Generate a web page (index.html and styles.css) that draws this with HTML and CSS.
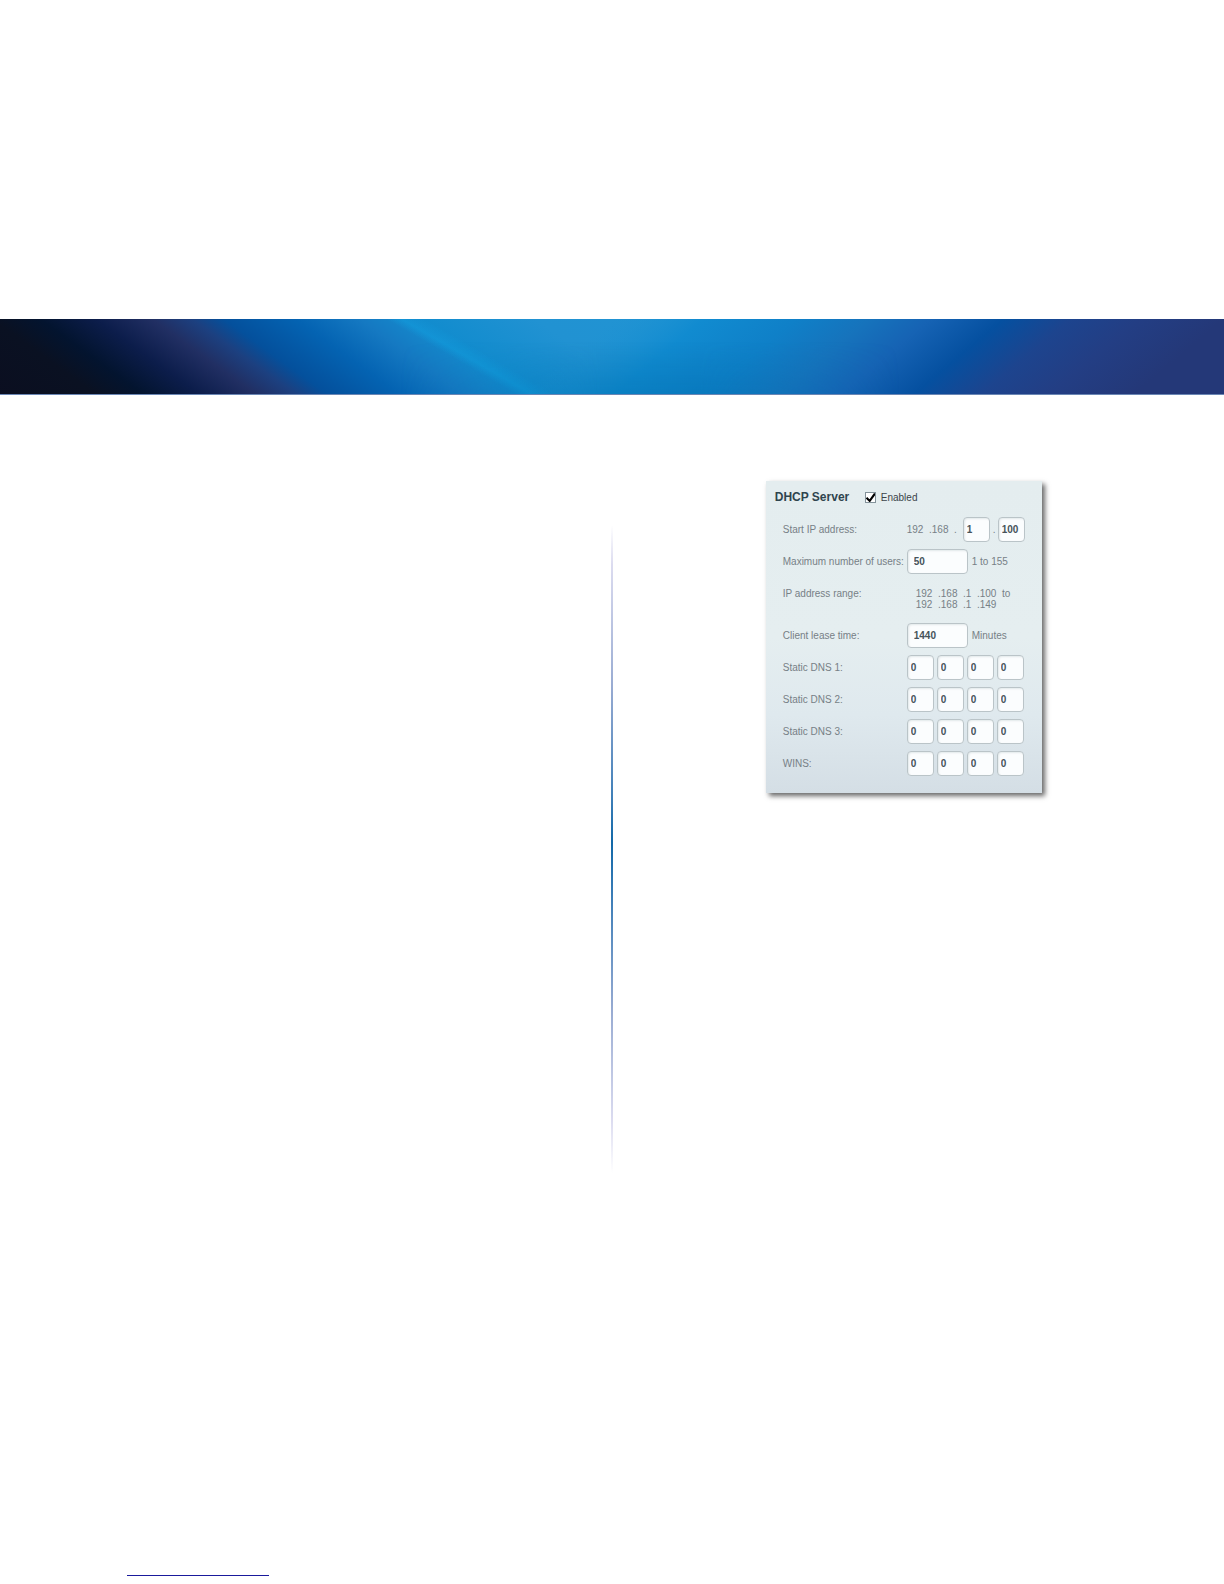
FILE: index.html
```html
<!DOCTYPE html>
<html lang="en">
<head>
    <meta charset="UTF-8">
    <meta name="viewport" content="width=device-width, initial-scale=1.0">
    <title>DHCP Server</title>
    <link rel="stylesheet" href="styles.css">
</head>
<body>
    <header class="banner">
        <svg viewBox="0 0 1224 75" preserveAspectRatio="none" aria-hidden="true">
            <defs>
                <linearGradient id="left" gradientUnits="userSpaceOnUse" x1="-120" y1="0" x2="680" y2="0" gradientTransform="skewX(54)">
                    <stop offset="0" stop-color="#0b0e20"/>
                    <stop offset="0.14" stop-color="#0a1122"/>
                    <stop offset="0.2" stop-color="#03142f"/>
                    <stop offset="0.27" stop-color="#0c1d4b"/>
                    <stop offset="0.34" stop-color="#212f63"/>
                    <stop offset="0.39" stop-color="#1c4080"/>
                    <stop offset="0.43" stop-color="#04509c"/>
                    <stop offset="0.52" stop-color="#0463b2"/>
                    <stop offset="0.6" stop-color="#1579c2"/>
                    <stop offset="0.64" stop-color="#1583c8"/>
                    <stop offset="0.68" stop-color="#128cce"/>
                    <stop offset="0.82" stop-color="#2192d2"/>
                    <stop offset="1" stop-color="#2194d3"/>
                </linearGradient>
                <linearGradient id="right" gradientUnits="userSpaceOnUse" x1="612" y1="0" x2="1224" y2="0" gradientTransform="skewX(-50)">
                    <stop offset="0" stop-color="#1e92d2" stop-opacity="0"/>
                    <stop offset="0.15" stop-color="#118bd0"/>
                    <stop offset="0.3" stop-color="#0f80c8"/>
                    <stop offset="0.42" stop-color="#1673bc"/>
                    <stop offset="0.52" stop-color="#1663b4"/>
                    <stop offset="0.64" stop-color="#0550a0"/>
                    <stop offset="0.75" stop-color="#1d448e"/>
                    <stop offset="0.86" stop-color="#233e84"/>
                    <stop offset="1" stop-color="#243878"/>
                </linearGradient>
                <linearGradient id="shade" x1="0" y1="0" x2="0" y2="1">
                    <stop offset="0.3" stop-color="#006fae" stop-opacity="0"/>
                    <stop offset="1" stop-color="#006fae" stop-opacity="0.4"/>
                </linearGradient>
                <linearGradient id="streak" gradientUnits="userSpaceOnUse" x1="386" y1="0" x2="425" y2="0" gradientTransform="skewX(60)">
                    <stop offset="0" stop-color="#12a0e0" stop-opacity="0"/>
                    <stop offset="0.4" stop-color="#12a0e0" stop-opacity="0.5"/>
                    <stop offset="1" stop-color="#12a0e0" stop-opacity="0"/>
                </linearGradient>
            </defs>
            <rect width="1224" height="75" fill="url(#left)"/>
            <rect width="1224" height="75" fill="url(#streak)"/>
            <rect width="1224" height="75" fill="url(#right)"/>
            <rect x="400" width="500" height="75" fill="url(#shade)" class="shade"/>
        </svg>
    </header>

    <main class="columns">
        <section class="column"></section>
        <div class="divider"></div>
        <section class="column">
            <form class="panel">
                <div class="panel-header">
                    <h2>DHCP Server</h2>
                    <input type="checkbox" id="enabled" class="check" checked>
                    <label for="enabled">Enabled</label>
                </div>

                <div class="row">
                    <label for="start3">Start IP address:</label>
                    <div class="field">
                        <span class="prefix">192&nbsp; .168&nbsp; .</span>
                        <input type="text" id="start3" class="box" value="1">
                        <span class="dot">.</span>
                        <input type="text" class="box" aria-label="Start IP address, last part" value="100">
                    </div>
                </div>
                <div class="row">
                    <label for="users">Maximum number of users:</label>
                    <div class="field">
                        <input type="text" id="users" class="box wide" value="50">
                        <span class="hint">1 to 155</span>
                    </div>
                </div>
                <div class="row range">
                    <span>IP address range:</span>
                    <div class="range-value">192&nbsp; .168&nbsp; .1&nbsp; .100&nbsp; to<br>192&nbsp; .168&nbsp; .1&nbsp; .149</div>
                </div>
                <div class="row">
                    <label for="lease">Client lease time:</label>
                    <div class="field">
                        <input type="text" id="lease" class="box wide" value="1440">
                        <span class="hint">Minutes</span>
                    </div>
                </div>
                <div class="row">
                    <label for="dns1">Static DNS 1:</label>
                    <div class="field">
                        <input type="text" id="dns1" class="box" value="0">
                        <input type="text" class="box" aria-label="Static DNS 1, part 2" value="0">
                        <input type="text" class="box" aria-label="Static DNS 1, part 3" value="0">
                        <input type="text" class="box" aria-label="Static DNS 1, part 4" value="0">
                    </div>
                </div>
                <div class="row">
                    <label for="dns2">Static DNS 2:</label>
                    <div class="field">
                        <input type="text" id="dns2" class="box" value="0">
                        <input type="text" class="box" aria-label="Static DNS 2, part 2" value="0">
                        <input type="text" class="box" aria-label="Static DNS 2, part 3" value="0">
                        <input type="text" class="box" aria-label="Static DNS 2, part 4" value="0">
                    </div>
                </div>
                <div class="row">
                    <label for="dns3">Static DNS 3:</label>
                    <div class="field">
                        <input type="text" id="dns3" class="box" value="0">
                        <input type="text" class="box" aria-label="Static DNS 3, part 2" value="0">
                        <input type="text" class="box" aria-label="Static DNS 3, part 3" value="0">
                        <input type="text" class="box" aria-label="Static DNS 3, part 4" value="0">
                    </div>
                </div>
                <div class="row">
                    <label for="wins">WINS:</label>
                    <div class="field">
                        <input type="text" id="wins" class="box" value="0">
                        <input type="text" class="box" aria-label="WINS, part 2" value="0">
                        <input type="text" class="box" aria-label="WINS, part 3" value="0">
                        <input type="text" class="box" aria-label="WINS, part 4" value="0">
                    </div>
                </div>
            </form>
        </section>
    </main>

    <footer class="footer">
        <div class="footer-line"></div>
    </footer>
</body>
</html>
```

FILE: styles.css
```css
* {
    box-sizing: border-box;
}
body {
    font-family: 'Liberation Sans', Arial, sans-serif;
    font-size: 10px;
    line-height: 11px;
    color: #778086;
    background: #fff;
    display: flex;
    flex-direction: column;
    min-height: 100vh;
    margin: 0;
    padding-top: 319px;
}

.banner {
    flex: none;
    height: 76px;
    border-bottom: 1px solid #6a86b4;
}
.banner svg {
    display: block;
    width: 100%;
    height: 100%;
}
.shade {
    mask-image: linear-gradient(90deg, transparent, #000 40%, #000 60%, transparent);
}

.columns {
    display: grid;
    grid-template-columns: 1fr 2px 1fr;
    align-items: start;
    padding-top: 86px;
}
.divider {
    height: 648px;
    margin-top: 44px;
    background: linear-gradient(rgba(80, 120, 190, 0), #dcdcf0 6%, #98abd2 25%, #3f7fb8 42%, #1268a8 49%, #3f7fb8 58%, #98abd2 75%, #dcdcf0 92%, rgba(80, 120, 190, 0));
}

.panel {
    width: 276px;
    margin-left: 25%;
    padding: 5px 0 17px 17px;
    display: flex;
    flex-direction: column;
    gap: 7px;
    background: linear-gradient(#e4edef, #e5eef0 50%, #dfe9ee 75%, #d4dee5);
    box-shadow: 3px 3px 5px rgba(0, 0, 0, 0.6);
}
.panel-header {
    display: flex;
    align-items: center;
    height: 24px;
    margin-left: -8px;
    padding-bottom: 2px;
    color: #3b444a;
}
.panel-header h2 {
    width: 90px;
    margin: 0;
    font-size: 12px;
    color: #2f444e;
}
.check {
    appearance: none;
    width: 11px;
    height: 11px;
    margin: 0 5px 0 0;
    border: 1px solid #83929a;
    background: #fff url("data:image/svg+xml,%3Csvg xmlns='http://www.w3.org/2000/svg' viewBox='0 0 10 10'%3E%3Cpath d='M1 5 L4 8 L9 1' fill='none' stroke='%23000' stroke-width='2'/%3E%3C/svg%3E") center / 10px 10px no-repeat;
}

.row {
    display: grid;
    grid-template-columns: 124px 1fr;
    align-items: center;
    height: 25px;
    white-space: nowrap;
}
.range {
    height: 35px;
    align-items: start;
    padding-top: 7px;
}
.range-value {
    padding-left: 9px;
}
.field {
    display: flex;
    align-items: center;
    gap: 3px;
}
.prefix {
    width: 53px;
}
.dot {
    width: 2px;
}
.hint {
    padding-left: 1px;
}
.box {
    width: 27px;
    height: 25px;
    padding: 0 3px;
    font-family: inherit;
    font-size: 10px;
    font-weight: bold;
    color: #46535a;
    background: #fbfdfe;
    border: 1px solid #bac4c8;
    border-radius: 4px;
    box-shadow: inset 1px 1px 2px #e2e8ea;
}
.wide {
    width: 61px;
    padding: 0 6px;
}

.footer {
    margin-top: auto;
    padding: 0 127px 8px;
}
.footer-line {
    width: 142px;
    border-bottom: 1px solid #1a1a9c;
}
```
